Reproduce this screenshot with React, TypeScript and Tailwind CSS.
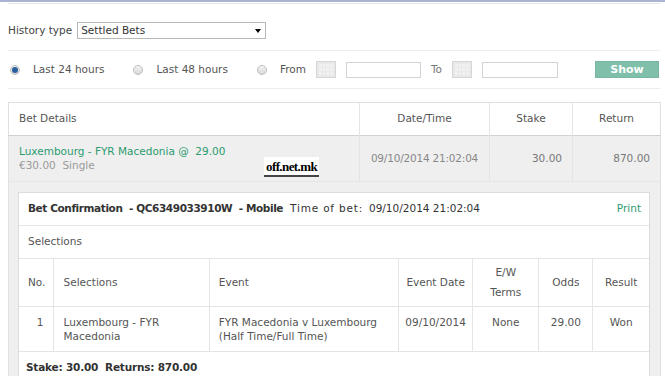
import React from 'react';

const Radio: React.FC<{ checked?: boolean }> = ({ checked }) => (
  <span className="flex h-[10px] w-[10px] items-center justify-center rounded-full border border-[#bdbdbd] bg-gradient-to-b from-[#f4f4f4] to-[#d9d9d9]">
    {checked && <span className="h-[6px] w-[6px] rounded-full bg-[#2a5f9e]" />}
  </span>
);

const CalendarBox: React.FC = () => (
  <span className="grid h-[17px] w-[20px] grid-cols-4 gap-px border border-[#d6d6d6] bg-[#e9e9e9] p-[2px]">
    {Array.from({ length: 12 }).map((_, i) => (
      <span key={i} className="bg-[#f1f1f1]" />
    ))}
  </span>
);

const HistoryFilters: React.FC = () => (
  <div>
    <div className="flex items-center border-b border-[#ececec] pt-[18px] pb-[11px]">
      <span className="text-[#444]">History type</span>
      <div className="ml-[5px] flex h-[17px] w-[189px] items-center justify-between border border-[#b9b9b9] bg-white pl-[3px] pr-[4px] text-[#333]">
        <span>Settled Bets</span>
        <span className="h-0 w-0 border-x-[3px] border-t-[4px] border-x-transparent border-t-black" />
      </div>
    </div>
    <div className="flex items-center border-b border-[#ececec] py-[10px] text-[#555]">
      <span className="ml-[2px]"><Radio checked /></span>
      <span className="ml-[13px]">Last 24 hours</span>
      <span className="ml-[29px]"><Radio /></span>
      <span className="ml-[13px]">Last 48 hours</span>
      <span className="ml-[29px]"><Radio /></span>
      <span className="ml-[13px]">From</span>
      <span className="ml-[10px]"><CalendarBox /></span>
      <span className="ml-[10px] h-[16px] w-[75px] border border-[#d4d4d4] bg-white" />
      <span className="ml-[10px] text-[#777]">To</span>
      <span className="ml-[10px]"><CalendarBox /></span>
      <span className="ml-[10px] h-[16px] w-[76px] border border-[#d4d4d4] bg-white" />
      <button className="ml-auto mr-[1px] h-[17px] w-[64px] border border-[#79b7a1] bg-[#80c0aa] text-[11px] font-bold text-white">
        Show
      </button>
    </div>
  </div>
);

const BetConfirmation: React.FC = () => {
  const cols = ['w-[34px]', 'w-[156px]', 'w-[189px]', 'w-[74px]', 'w-[66px]', 'w-[54px]', 'w-[56px]'];
  return (
    <div className="border border-[#dcdcdc] bg-white">
      <div className="flex h-[33px] items-center justify-between border-b border-[#e8e8e8] px-[9px]">
        <div className="flex items-center text-[#333]">
          <span className="font-bold tracking-[-0.4px]">Bet Confirmation&nbsp; - QC6349033910W&nbsp; - Mobile</span>
          <span className="ml-[7px] tracking-[0.8px]">Time of bet:</span>
          <span className="ml-[6px]">09/10/2014 21:02:04</span>
        </div>
        <span className="mr-[-1px] text-[#2c9b6f]">Print</span>
      </div>
      <div className="flex h-[33px] items-center border-b border-[#e4e4e4] px-[9px] text-[#555]">Selections</div>
      <table className="w-full table-fixed border-collapse text-[#555]">
        <colgroup>
          {cols.map((c, i) => (
            <col key={i} className={c} />
          ))}
        </colgroup>
        <thead>
          <tr className="h-[47px] border-b border-[#e4e4e4] leading-[20px]">
            <th className="pl-[9px] text-left font-normal">No.</th>
            <th className="border-l border-[#e4e4e4] pl-[10px] text-left font-normal">Selections</th>
            <th className="border-l border-[#e4e4e4] pl-[9px] text-left font-normal">Event</th>
            <th className="border-l border-[#e4e4e4] text-center font-normal">Event Date</th>
            <th className="border-l border-[#e4e4e4] text-center font-normal">E/W<br />Terms</th>
            <th className="border-l border-[#e4e4e4] text-center font-normal">Odds</th>
            <th className="border-l border-[#e4e4e4] text-center font-normal">Result</th>
          </tr>
        </thead>
        <tbody>
          <tr className="h-[45px] border-b border-[#e4e4e4] align-top leading-[14px]">
            <td className="pt-[8px] pr-[9px] text-right">1</td>
            <td className="border-l border-[#e4e4e4] pt-[8px] pl-[10px]">Luxembourg - FYR<br />Macedonia</td>
            <td className="border-l border-[#e4e4e4] pt-[8px] pl-[9px]">FYR Macedonia v Luxembourg<br />(Half Time/Full Time)</td>
            <td className="border-l border-[#e4e4e4] pt-[8px] text-center">09/10/2014</td>
            <td className="border-l border-[#e4e4e4] pt-[8px] text-center">None</td>
            <td className="border-l border-[#e4e4e4] pt-[8px] text-center">29.00</td>
            <td className="border-l border-[#e4e4e4] pt-[8px] text-center">Won</td>
          </tr>
        </tbody>
      </table>
      <div className="px-[7px] pt-[8px] pb-[12px] font-bold tracking-[-0.2px] text-[#333]">Stake: 30.00&nbsp; Returns: 870.00</div>
    </div>
  );
};

const App: React.FC = () => {
  return (
    <div className="h-[376px] overflow-hidden bg-white font-['DejaVu_Sans',sans-serif] text-[10.5px] text-[#555]">
      <div className="h-[2px] bg-[#a9b5d2]" />
      <div className="pl-2 pr-[5px]">
        <div className="mt-px h-px bg-[#e2e6ee]" />
        <HistoryFilters />

        <table className="mt-[13px] w-full table-fixed border-collapse border border-[#e0e0e0]">
          <colgroup>
            <col className="w-[351px]" />
            <col className="w-[130px]" />
            <col className="w-[83px]" />
            <col className="w-[88px]" />
          </colgroup>
          <thead>
            <tr className="h-[33px] border-b border-[#d2d2d2] text-[#555]">
              <th className="pl-[10px] text-left font-normal">Bet Details</th>
              <th className="border-l border-[#e4e4e4] text-center font-normal">Date/Time</th>
              <th className="border-l border-[#e4e4e4] text-center font-normal">Stake</th>
              <th className="border-l border-[#e4e4e4] text-center font-normal">Return</th>
            </tr>
          </thead>
          <tbody>
            <tr className="h-[46px] border-b border-[#e6e6e6] bg-[#efefef]">
              <td className="relative pt-[8px] pl-[10px] align-top leading-[14px]">
                <div className="text-[#2c9b6f]">Luxembourg - FYR Macedonia @&nbsp; 29.00</div>
                <div className="text-[#9a9a9a]">€30.00&nbsp; Single</div>
                <span className="absolute left-[255px] top-[21px] flex h-[20px] items-center border-b-2 border-[#444] bg-white px-[2px] font-['Liberation_Serif',serif] text-[13px] font-bold leading-none tracking-[-0.6px] text-black">
                  off.net.mk
                </span>
              </td>
              <td className="border-l border-[#e4e4e4] text-center tracking-[-0.2px] text-[#888]">09/10/2014 21:02:04</td>
              <td className="border-l border-[#e4e4e4] pr-[10px] text-right text-[#777]">30.00</td>
              <td className="border-l border-[#e4e4e4] pr-[10px] text-right text-[#777]">870.00</td>
            </tr>
            <tr className="bg-[#efefef]">
              <td colSpan={4} className="pt-[10px] pl-[9px] pr-[10px]">
                <BetConfirmation />
              </td>
            </tr>
          </tbody>
        </table>
      </div>
    </div>
  );
};

export default App;
